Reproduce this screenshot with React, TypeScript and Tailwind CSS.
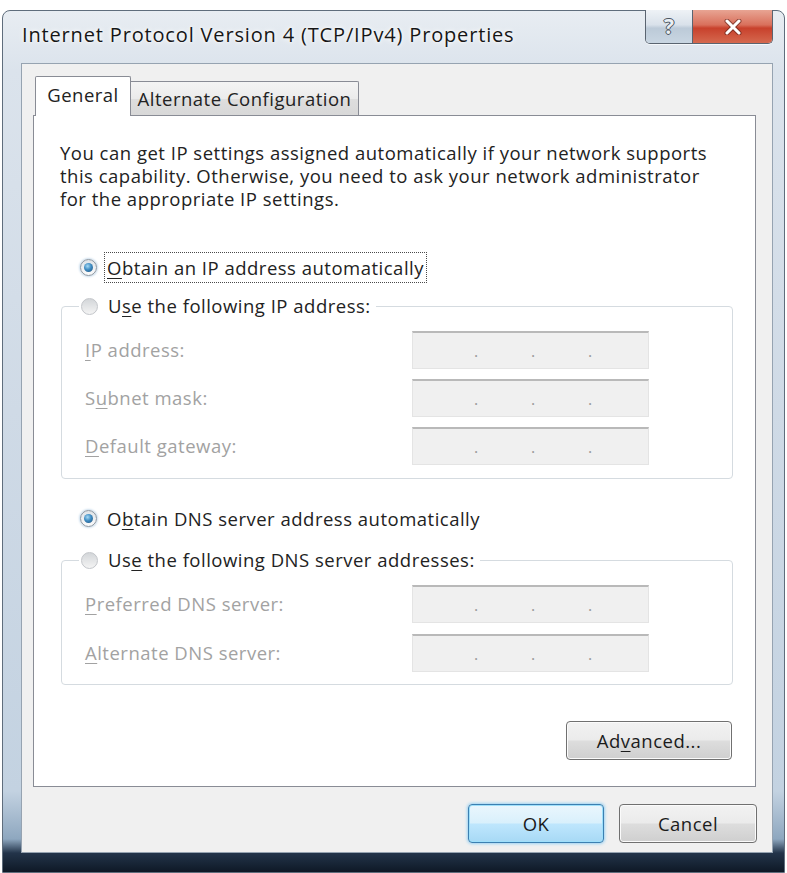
import React from "react";

function Radio({ checked }: { checked?: boolean }) {
  return checked ? (
    <span className="inline-flex w-[17px] h-[17px] shrink-0 rounded-full border border-[#8c96a0] bg-[linear-gradient(to_bottom,#dfe3e7,#fbfbfb)] items-center justify-center shadow-[0_0_2px_1px_#c9dcec]">
      <span className="w-[9px] h-[9px] rounded-full bg-[radial-gradient(circle_at_40%_35%,#a6daf5_0%,#3f8cc2_45%,#1b4c78_100%)]" />
    </span>
  ) : (
    <span className="inline-block w-[17px] h-[17px] shrink-0 rounded-full border border-[#c3c6ca] bg-[linear-gradient(to_bottom,#d3d6d9,#f4f4f4)]" />
  );
}

function IpField() {
  return (
    <div className="w-[237px] h-[38px] bg-[#f0f0f0] border border-[#e4e4e4] border-t-2 border-t-[#b9b9b9] flex items-center pl-[61px] gap-[53px] text-[#9a9a9a] text-[16px] leading-none tracking-normal">
      <span className="w-[4px] text-center">.</span>
      <span className="w-[4px] text-center">.</span>
      <span className="w-[4px] text-center">.</span>
    </div>
  );
}

function FieldRow({ label }: { label: React.ReactNode }) {
  return (
    <div className="flex items-center h-[38px]">
      <div className="w-[327px] text-[#a2a2a2]">{label}</div>
      <IpField />
    </div>
  );
}

function U({ children }: { children: React.ReactNode }) {
  return <span className="underline underline-offset-[3px] decoration-1">{children}</span>;
}

function Btn({ children, primary, w }: { children: React.ReactNode; primary?: boolean; w: string }) {
  return (
    <div
      className={
        primary
          ? `${w} h-[39px] rounded-[4px] border border-[#3c7fb1] bg-[linear-gradient(to_bottom,#eaf6fd_0%,#d9f0fc_48%,#bee6fd_52%,#a7d9f5_100%)] shadow-[inset_0_0_0_1px_#9fe0fb,0_0_3px_1px_#9bd3f3] flex items-center justify-center text-[#1b1b1b]`
          : `${w} h-[39px] rounded-[4px] border border-[#707070] bg-[linear-gradient(to_bottom,#f2f2f2_0%,#ebebeb_48%,#dddddd_52%,#cfcfcf_100%)] shadow-[inset_0_0_0_1px_#fbfbfb] flex items-center justify-center text-[#1b1b1b]`
      }
    >
      {children}
    </div>
  );
}

export default function App() {
  return (
    <div className="w-[787px] h-[873px] bg-white overflow-hidden font-['Open_Sans','Noto_Sans',sans-serif] text-[#222222] text-[18.5px] tracking-[0.5px]">
      <div className="relative mt-[10px] ml-[2px] w-[783px] h-[863px] rounded-t-[8px] border border-[#5f6d7c] pl-[18px] pr-[11px] pb-[19px] flex flex-col bg-[linear-gradient(to_bottom,#e8edf2_0px,#dbe3ec_60px,#cfdae6_400px,#c3d2e1_780px,#8ea7bf_828px,#23344a_842px,#0d1724_862px)]">
        {/* title bar */}
        <div className="h-[52px] shrink-0 flex items-start">
          <div className="pt-[11px] ml-[1px] text-[20px] tracking-[0.84px] text-[#161616] leading-[26px] [text-shadow:0_0_6px_#ffffff,0_0_3px_#ffffff]">
            Internet Protocol Version 4 (TCP/IPv4) Properties
          </div>
        </div>
        {/* caption buttons */}
        <div className="absolute top-[-1px] right-[11px] flex h-[34px] rounded-b-[5px] border border-t-0 border-[#5a6470] overflow-hidden shadow-[0_1px_0_#f4f7fa]">
          <div className="w-[47px] h-full flex items-center justify-center border-r border-[#5a6470] bg-[linear-gradient(to_bottom,#eef2f6_0%,#d9e1ea_45%,#bccad8_55%,#c9d6e2_100%)]">
            <span className="text-[21px] font-bold text-[#e9eef3] leading-none tracking-normal [text-shadow:1px_0_0_#4b5560,-1px_0_0_#4b5560,0_1px_0_#4b5560,0_-1px_0_#4b5560]">?</span>
          </div>
          <div className="w-[79px] h-full flex items-center justify-center bg-[linear-gradient(to_bottom,#e8a493_0%,#d9705c_45%,#c8412c_55%,#d5694f_100%)]">
            <svg width="18" height="16" viewBox="0 0 18 16">
              <path d="M3 2 L15 14 M15 2 L3 14" stroke="#5a2018" strokeWidth="5" strokeLinecap="round" opacity="0.6" />
              <path d="M3 2 L15 14 M15 2 L3 14" stroke="#ffffff" strokeWidth="3" strokeLinecap="round" />
            </svg>
          </div>
        </div>
        {/* client */}
        <div className="flex-1 flex flex-col bg-[#f0f0f0] border border-[#96a3b1]">
          {/* tabs */}
          <div className="flex items-end h-[40px] mt-[12px] ml-[13px] relative z-10">
            <div className="w-[96px] h-[40px] bg-white border border-b-0 border-[#898c95] rounded-t-[2px] flex items-center justify-center pb-[3px]">
              General
            </div>
            <div className="w-[228px] h-[34px] mb-[1px] border border-l-0 border-b-0 border-[#898c95] rounded-tr-[2px] bg-[linear-gradient(to_bottom,#f4f4f4_0%,#ebebeb_50%,#dedede_52%,#d8d8d8_100%)] flex items-center justify-center">
              Alternate Configuration
            </div>
          </div>
          {/* panel */}
          <div className="-mt-[1px] ml-[11px] w-[723px] h-[672px] bg-white border border-[#898c95] flex flex-col">
            <div className="pl-[26px] pt-[25px] leading-[23px] whitespace-nowrap">
              You can get IP settings assigned automatically if your network supports
              <br />
              this capability. Otherwise, you need to ask your network administrator
              <br />
              for the appropriate IP settings.
            </div>
            {/* radio 1 */}
            <div className="mt-[42px] ml-[46px] h-[31px] flex items-center">
              <Radio checked />
              <span className="ml-[7px] px-[2px] h-[31px] flex items-center border border-dotted border-[#4a4a4a]">
                <U>O</U>btain an IP address automatically
              </span>
            </div>
            {/* fieldset 1 */}
            <fieldset className="mt-[8px] ml-[27px] w-[672px] border border-[#d5dbe0] rounded-[4px] pl-[23px] pt-[10px] pb-[13px] flex flex-col gap-[10px]">
              <legend className="ml-[-6px] px-[2px] h-[30px] flex items-center">
                <Radio />
                <span className="ml-[10px] pr-[3px]">
                  U<U>s</U>e the following IP address:
                </span>
              </legend>
              <FieldRow label={<><U>I</U>P address:</>} />
              <FieldRow label={<>S<U>u</U>bnet mask:</>} />
              <FieldRow label={<><U>D</U>efault gateway:</>} />
            </fieldset>
            {/* radio 3 */}
            <div className="mt-[24px] ml-[46px] h-[31px] flex items-center">
              <Radio checked />
              <span className="ml-[10px]">
                O<U>b</U>tain DNS server address automatically
              </span>
            </div>
            {/* fieldset 2 */}
            <fieldset className="mt-[11px] ml-[27px] w-[672px] border border-[#d5dbe0] rounded-[4px] pl-[23px] pt-[10px] pb-[12px] flex flex-col gap-[11px]">
              <legend className="ml-[-6px] px-[2px] h-[30px] flex items-center">
                <Radio />
                <span className="ml-[10px] pr-[3px]">
                  Us<U>e</U> the following DNS server addresses:
                </span>
              </legend>
              <FieldRow label={<><U>P</U>referred DNS server:</>} />
              <FieldRow label={<><U>A</U>lternate DNS server:</>} />
            </fieldset>
            <div className="mt-[36px] ml-[532px]">
              <Btn w="w-[166px]">
                Ad<U>v</U>anced...
              </Btn>
            </div>
          </div>
          {/* buttons */}
          <div className="mt-[17px] ml-[446px] flex gap-[15px]">
            <Btn primary w="w-[136px]">OK</Btn>
            <Btn w="w-[138px]">Cancel</Btn>
          </div>
        </div>
      </div>
    </div>
  );
}
